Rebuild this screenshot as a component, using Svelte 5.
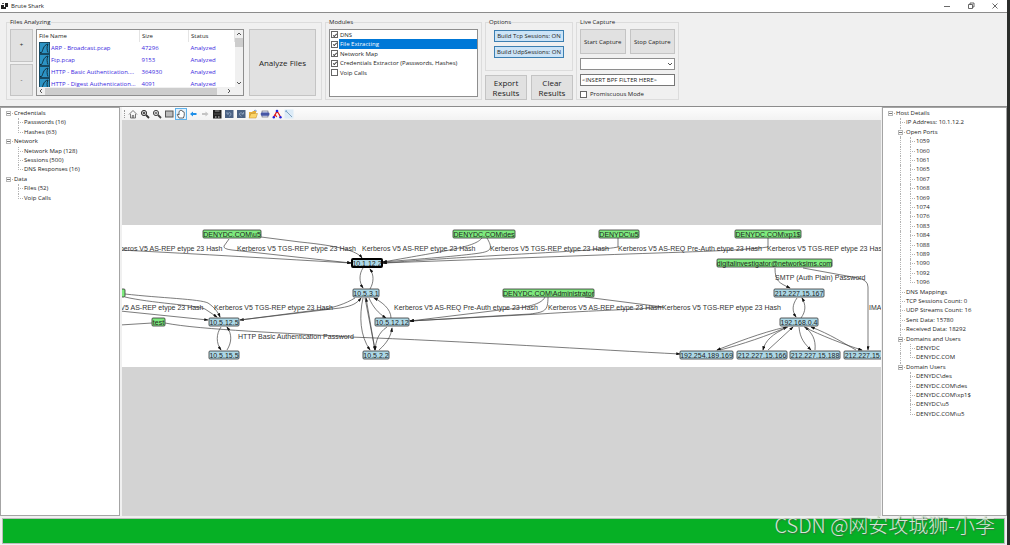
<script>
  // ── ribbon data ────────────────────────────────────────────
  const files = [
    { name: 'ARP - Broadcast.pcap', size: 47296 },
    { name: 'Ftp.pcap', size: 9153 },
    { name: 'HTTP - Basic Authentication....', size: 364930 },
    { name: 'HTTP - Digest Authentication...', size: 4091 }
  ];

  let modules = $state([
    { name: 'DNS', on: true },
    { name: 'File Extracting', on: true },
    { name: 'Network Map', on: true },
    { name: 'Credentials Extractor (Passwords, Hashes)', on: true },
    { name: 'Voip Calls', on: false }
  ]);
  let selected = $state(1);
  let filter = $state('<INSERT BPF FILTER HERE>');
  let tcp = $state(true);
  let udp = $state(true);

  // ── trees ──────────────────────────────────────────────────
  const results = [
    { text: 'Credentials', kids: [{ text: 'Passwords (16)' }, { text: 'Hashes (63)' }] },
    { text: 'Network', kids: [{ text: 'Network Map (128)' }, { text: 'Sessions (500)' }, { text: 'DNS Responses (16)' }] },
    { text: 'Data', kids: [{ text: 'Files (52)' }, { text: 'Voip Calls' }] }
  ];
  const ports = [1059, 1060, 1061, 1065, 1067, 1068, 1069, 1074, 1076, 1083, 1084, 1088, 1089, 1090, 1092, 1096];
  const host = [
    {
      text: 'Host Details',
      kids: [
        { text: 'IP Address: 10.1.12.2' },
        { text: 'Open Ports', kids: ports.map((p) => ({ text: String(p) })) },
        { text: 'DNS Mappings' },
        { text: 'TCP Sessions Count: 0' },
        { text: 'UDP Streams Count: 16' },
        { text: 'Sent Data: 15780' },
        { text: 'Received Data: 18292' },
        { text: 'Domains and Users', kids: [{ text: 'DENYDC' }, { text: 'DENYDC.COM' }] },
        {
          text: 'Domain Users',
          kids: ['DENYDC\\des', 'DENYDC.COM\\des', 'DENYDC.COM\\xp1$', 'DENYDC\\u5', 'DENYDC.COM\\u5'].map((text) => ({ text }))
        }
      ]
    }
  ];

  // flatten to rows; guides = one cell per level, 'line' | 'tee' | 'end' | ''
  function flatten(nodes, parents = [], root = true) {
    return nodes.flatMap((n, i) => {
      const last = i === nodes.length - 1;
      const own = root ? [] : [last ? 'end' : 'tee'];
      const down = root ? [] : [last ? '' : 'line'];
      const row = { text: n.text, box: !!n.kids, root, guides: [...parents, ...own] };
      return [row, ...flatten(n.kids ?? [], [...parents, ...down], false)];
    });
  }
  const resultRows = flatten(results);
  const hostRows = flatten(host);

  // ── network map ────────────────────────────────────────────
  const nodes = [
    { x: 203, y: 229, w: 58, t: 'DENYDC.COM\\u5', user: true },
    { x: 453, y: 229, w: 62, t: 'DENYDC.COM\\des', user: true },
    { x: 599, y: 229, w: 40, t: 'DENYDC\\u5', user: true },
    { x: 735, y: 229, w: 66, t: 'DENYDC.COM\\xp1$', user: true },
    { x: 717, y: 258, w: 115, t: 'digitalinvestigator@networksims.com', user: true },
    { x: 503, y: 288, w: 91, t: 'DENYDC.COM\\Administrator', user: true },
    { x: 94, y: 288, w: 31, t: '', user: true },
    { x: 152, y: 317, w: 13, t: 'test', user: true },
    { x: 352, y: 258, w: 30, t: '10.1.12.2', current: true },
    { x: 353, y: 288, w: 26, t: '10.5.3.1' },
    { x: 209, y: 317, w: 30, t: '10.5.12.5' },
    { x: 375, y: 317, w: 34, t: '10.5.12.12' },
    { x: 209, y: 350, w: 30, t: '10.5.15.5' },
    { x: 363, y: 350, w: 26, t: '10.5.2.2' },
    { x: 774, y: 288, w: 50, t: '212.227.15.167' },
    { x: 780, y: 317, w: 38, t: '192.168.0.4' },
    { x: 680, y: 350, w: 53, t: '192.254.189.169' },
    { x: 737, y: 350, w: 50, t: '212.227.15.166' },
    { x: 790, y: 350, w: 50, t: '212.227.15.188' },
    { x: 844, y: 350, w: 50, t: '212.227.15.189' }
  ];

  const asRep = 'Kerberos V5 AS-REP etype 23 Hash';
  const tgsRep = 'Kerberos V5 TGS-REP etype 23 Hash';
  const preAuth = 'Kerberos V5 AS-REQ Pre-Auth etype 23 Hash';
  const labels = [
    { x: 109, y: 250, t: asRep },
    { x: 237, y: 250, t: tgsRep },
    { x: 362, y: 250, t: asRep },
    { x: 490, y: 250, t: tgsRep },
    { x: 618, y: 250, t: preAuth },
    { x: 767, y: 250, t: tgsRep },
    { x: 775, y: 279, t: 'SMTP (Auth Plain) Password' },
    { x: 90, y: 309, t: asRep },
    { x: 214, y: 309, t: tgsRep },
    { x: 394, y: 309, t: preAuth },
    { x: 548, y: 309, t: asRep },
    { x: 662, y: 309, t: tgsRep },
    { x: 869, y: 309, t: 'IMAP Password' },
    { x: 238, y: 338, t: 'HTTP Basic Authentication Password' }
  ];

  const edges = [
    'M229 238 L224 245 Q223 248 232 249 L351 262',
    'M261 236 L300 241 C340 245 357 250 362 257',
    'M120 249 C200 253 280 258 351 262',
    'M482 237 C475 246 450 249 383 261',
    'M487 237 C492 246 493 250 480 252 C460 255 420 258 383 261',
    'M618 237 V246 C600 250 500 253 383 262',
    'M768 237 V246 C740 250 680 251 600 254 L383 262',
    'M363 267 C359 273 359 281 363 287',
    'M370 288 C374 281 374 274 370 268',
    'M125 293 C160 297 200 298 208 302 C214 306 218 311 220 316',
    'M125 296 C150 302 195 304 205 308 L217 316',
    'M120 310 L208 319',
    'M355 297 C345 303 335 306 325 308 L240 319',
    'M240 319 L340 307 C353 305 357 302 361 297',
    'M165 322 C200 329 290 332 350 336 C460 340 600 349 680 353',
    'M221 326 C216 333 216 342 221 349',
    'M227 349 C232 341 232 333 227 326',
    'M363 297 C359 315 360 335 370 349',
    'M375 349 L366 297',
    'M365 297 L375 349',
    'M369 297 C373 306 378 312 386 317',
    'M391 317 C391 308 382 301 374 297',
    'M387 326 C378 332 376 340 375 349',
    'M379 349 C387 342 391 335 392 327',
    'M545 296 C541 305 520 307 500 309 L410 320',
    'M548 296 C548 310 545 311 530 313 L410 320',
    'M663 306 C630 309 600 309 540 313 L410 320',
    'M775 267 C775 280 779 282 790 287',
    'M803 267 L858 277 Q868 279 868 286 V349',
    'M797 297 C792 304 792 310 796 316',
    'M801 317 C806 310 806 304 802 297',
    'M786 326 C760 332 735 342 717 349',
    'M720 349 C740 344 770 334 787 326',
    'M788 326 C772 333 765 340 763 349',
    'M768 349 L793 326',
    'M799 326 C800 338 805 343 811 349',
    'M815 349 C816 338 812 332 805 326',
    'M804 326 C820 334 845 344 862 349',
    'M856 349 C845 343 830 333 811 326'
  ];
  // tails that run behind a label, no arrowhead
  const tails = ['M120 324 L152 322', 'M585 296 L663 306'];
</script>

{#snippet tree(rows, label)}
  <ul class="tree" aria-label={label}>
    {#each rows as row}
      <li>
        {#each row.guides as g, k}
          <span class="guide {g}">{#if row.box && k === row.guides.length - 1}<i class="box"></i>{/if}</span>
        {/each}
        {#if row.root}
          <span class="guide root"><i class="box"></i></span>
        {/if}
        <span class="text">{row.text}</span>
      </li>
    {/each}
  </ul>
{/snippet}

<div class="app">
  <header class="title">
    <svg class="logo" viewBox="0 0 8 8" aria-hidden="true">
      <path d="M0 3h3v4H0z M4 1h3v4H4z M3 5h2v2H3z" fill="#222" />
      <path d="M1 1h2v1H1z" fill="#555" />
    </svg>
    <h1>Brute Shark</h1>
    <div class="window-buttons">
      <button aria-label="Minimize"><svg viewBox="0 0 8 8"><path d="M1 4.5h6" /></svg></button>
      <button aria-label="Restore"><svg viewBox="0 0 8 8"><path d="M1.5 2.5h4v4h-4z M3 2.5V1h4v4H5.5" /></svg></button>
      <button aria-label="Close"><svg viewBox="0 0 8 8"><path d="M1.5 1.5l5 5 M6.5 1.5l-5 5" /></svg></button>
    </div>
  </header>

  <div class="ribbon">
    <fieldset>
      <legend>Files Analyzing</legend>
      <div class="files">
        <div class="stack">
          <button class="btn" aria-label="Add file">+</button>
          <button class="btn" aria-label="Remove file">-</button>
        </div>
        <div class="list">
          <div class="pane">
            <table>
              <thead>
                <tr><th>File Name</th><th>Size</th><th>Status</th></tr>
              </thead>
              <tbody>
                {#each files as f}
                  <tr>
                    <td>
                      <div class="file">
                        <svg viewBox="0 0 11 12" aria-hidden="true">
                          <rect x="0.5" y="0.5" width="10" height="11" fill="#2c93c4" stroke="#174a63" />
                          <path d="M1 10.5H2.5C4 9 4 3 9 2C7.5 5 8 8 9 10.5" fill="none" stroke="#10303f" />
                        </svg>
                        {f.name}
                      </div>
                    </td>
                    <td>{f.size}</td>
                    <td>Analyzed</td>
                  </tr>
                {/each}
              </tbody>
            </table>
            <div class="vbar" aria-hidden="true">
              <svg viewBox="0 0 8 8"><path d="M2 5l2-2 2 2" /></svg>
              <span></span>
              <svg viewBox="0 0 8 8"><path d="M2 3l2 2 2-2" /></svg>
            </div>
          </div>
          <div class="hbar" aria-hidden="true">
            <svg viewBox="0 0 8 8"><path d="M5 2L3 4l2 2" /></svg>
            <span></span>
            <svg viewBox="0 0 8 8"><path d="M3 2l2 2-2 2" /></svg>
          </div>
        </div>
        <button class="btn big analyze">Analyze Files</button>
      </div>
    </fieldset>

    <fieldset>
      <legend>Modules</legend>
      <div class="modules">
        {#each modules as m, i}
          <label>
            <input type="checkbox" bind:checked={m.on} onchange={() => (selected = i)} />
            <span class:selected={selected === i}>{m.name}</span>
          </label>
        {/each}
      </div>
    </fieldset>

    <div class="column">
      <fieldset class="options">
        <legend>Options</legend>
        <div class="toggles">
          <button class="toggle" onclick={() => (tcp = !tcp)}>Build Tcp Sessions: {tcp ? 'ON' : 'OFF'}</button>
          <button class="toggle" onclick={() => (udp = !udp)}>Build UdpSessions: {udp ? 'ON' : 'OFF'}</button>
        </div>
      </fieldset>
      <div class="pair">
        <button class="btn big">Export Results</button>
        <button class="btn big">Clear Results</button>
      </div>
    </div>

    <fieldset>
      <legend>Live Capture</legend>
      <div class="capture">
        <div class="pair">
          <button class="btn">Start Capture</button>
          <button class="btn">Stop Capture</button>
        </div>
        <div class="combo">
          <select aria-label="Network device"><option></option></select>
          <svg viewBox="0 0 8 8" aria-hidden="true"><path d="M2 3l2 2 2-2" /></svg>
        </div>
        <input class="filter" type="text" aria-label="BPF filter" bind:value={filter} />
        <label class="promiscuous"><input type="checkbox" /> Promiscuous Mode</label>
      </div>
    </fieldset>
  </div>

  <main>
    <aside class="left">{@render tree(resultRows, 'Results')}</aside>

    <section class="map">
      <div class="tools">
        <i class="grip"></i>
        <button aria-label="Home"><svg viewBox="0 0 10 10"><path d="M1 5.5L5 1.5l4 4M2.5 5v4h5V5M4.3 9V6.5h1.4V9" fill="none" stroke="#555" stroke-width="0.8" /></svg></button>
        <button aria-label="Zoom in"><svg viewBox="0 0 10 10"><circle cx="4" cy="4" r="2.6" fill="#ddd" stroke="#333" /><path d="M6 6l3 3" stroke="#333" stroke-width="1.8" /><path d="M2.8 4h2.4M4 2.8v2.4" stroke="#222" /></svg></button>
        <button aria-label="Zoom out"><svg viewBox="0 0 10 10"><circle cx="4" cy="4" r="2.6" fill="#ddd" stroke="#444" /><path d="M6 6l3 3" stroke="#444" stroke-width="1.8" /><path d="M2.8 4h2.4" stroke="#222" /></svg></button>
        <button aria-label="Window zoom"><svg viewBox="0 0 10 10"><rect x="1.5" y="2" width="7.5" height="6" fill="#bbb" stroke="#555" /></svg></button>
        <button aria-label="Pan" class="active"><svg viewBox="0 0 10 10"><path d="M3 9L1.2 5.5l1-.5L3 6V3q0-1 .8-.8Q4 1 5 1.4Q6 1 6.3 2.2Q7.2 1.8 7.3 3Q8.5 2.8 8.3 4.2Q8.5 7 7.3 9z" fill="#fff" stroke="#444" stroke-width="0.8" /></svg></button>
        <button aria-label="Back"><svg viewBox="0 0 10 10"><path d="M2 5l3-2.5v1.5h3.5v2H5v1.5z" fill="#1e8fe8" /></svg></button>
        <button aria-label="Forward"><svg viewBox="0 0 10 10"><path d="M8.5 5l-3-2.5v1.5H2v2h3.5v1.5z" fill="#c4c4c4" /></svg></button>
        <button aria-label="Save"><svg viewBox="0 0 10 10"><rect x="1" y="1" width="8.5" height="8.5" fill="#222" /><path d="M3 2h4.5" stroke="#999" /><path d="M2 5h6.5" stroke="#777" stroke-width="0.6" /><path d="M3 8h1.5M6 8h1.5" stroke="#ddd" /></svg></button>
        <button aria-label="Undo"><svg viewBox="0 0 10 10"><rect x="1" y="1" width="8.5" height="8" fill="#4a6183" /><path d="M3 3v2h2M3.3 5Q5.5 2.5 7 4.5Q7.5 6.5 5 7.3" fill="none" stroke="#93a7c4" stroke-width="0.8" /></svg></button>
        <button aria-label="Redo"><svg viewBox="0 0 10 10"><rect x="1" y="1" width="8.5" height="8" fill="#4a6183" /><path d="M7.5 3v2h-2M7 5Q5 2.5 3.5 4.5Q3 6.5 5.5 7.3" fill="none" stroke="#93a7c4" stroke-width="0.8" /></svg></button>
        <button aria-label="Open"><svg viewBox="0 0 10 10"><path d="M1 9V3h3l1-1h3v2" fill="#e4ad3a" /><path d="M1 9l2-4.5h6.5L8 9z" fill="#fbd56b" stroke="#c08a20" stroke-width="0.5" /><path d="M6 1.5q2-.8 3 1" fill="none" stroke="#4a78c0" stroke-width="0.7" /></svg></button>
        <button aria-label="Print"><svg viewBox="0 0 10 10"><rect x="2" y="2" width="6" height="6" fill="#dde5fa" stroke="#556" stroke-width="0.6" /><rect x="0.8" y="3.5" width="8.6" height="3.2" rx="1" fill="#4656a5" /></svg></button>
        <button aria-label="Layout"><svg viewBox="0 0 10 10"><path d="M5 2L3 6M5 2l2.5 4M3 5.5L1.8 8M3 5.5l1.7 2.5M7.2 5.5L8.5 8" stroke="#e02020" stroke-width="1.3" /><g fill="#2222dd"><circle cx="5" cy="2" r="1.3" /><circle cx="1.8" cy="8.2" r="1.2" /><circle cx="8.5" cy="8.2" r="1.2" /></g></svg></button>
        <button aria-label="Insert edge"><svg viewBox="0 0 10 10"><rect x="0.5" y="0.5" width="9" height="9" fill="#dcebf7" /><path d="M2 2l6 6" stroke="#6a90b0" stroke-width="0.8" /><circle cx="2.2" cy="2.2" r="1" fill="#7aa5cc" /></svg></button>
      </div>

      <div class="canvas">
        <svg class="graph" viewBox="122 224 759 142" role="img" aria-label="Network map">
          <defs>
            <marker id="arrow" viewBox="0 0 6 4" refX="5" refY="2" markerWidth="5" markerHeight="3" markerUnits="userSpaceOnUse" orient="auto">
              <path d="M0 0L6 2L0 4z" fill="#111" />
            </marker>
          </defs>
          <g class="edges">
            {#each edges as d}<path {d} marker-end="url(#arrow)" />{/each}
            {#each tails as d}<path {d} />{/each}
          </g>
          <g class="labels">
            {#each labels as l}<text x={l.x} y={l.y}>{l.t}</text>{/each}
          </g>
          {#each nodes as n}
            <g class="node" class:user={n.user} class:current={n.current}>
              <rect x={n.x} y={n.y} width={n.w} height="8" rx="1" />
              <text x={n.x + n.w / 2} y={n.y + 7}>{n.t}</text>
            </g>
          {/each}
        </svg>
      </div>
    </section>

    <aside class="right">{@render tree(hostRows, 'Host details')}</aside>
  </main>

  <footer>
    <progress value="100" max="100" aria-label="Analysis progress"></progress>
    <span class="mark">CSDN @网安攻城狮-小李</span>
  </footer>
</div>

<style>
  :global(body) { background: #f0f0f0; }

  .app {
    display: flex;
    flex-direction: column;
    box-sizing: border-box;
    min-height: 100vh;
    border-right: 3px solid #2b2d2b;
    background: #f0f0f0;
    color: #1c1c1c;
    font: 6px/8px 'Open Sans', 'Noto Sans', sans-serif;
  }
  button, input, select {
    box-sizing: border-box;
    margin: 0;
    padding: 0;
    border-radius: 0;
    font: inherit;
    color: inherit;
  }
  ul, h1 { margin: 0; padding: 0; font: inherit; list-style: none; }
  svg { display: block; }

  /* ── title bar ─────────────────────────────────────────── */
  .title {
    display: flex;
    align-items: center;
    height: 12px;
    padding-left: 1px;
    background: #fff;
    border-bottom: 1px solid #8c8c8c;
  }
  .logo { width: 8px; height: 8px; margin-right: 2px; }
  .title h1 { flex: 1; }
  .window-buttons { display: flex; }
  .window-buttons button {
    display: grid;
    place-items: center;
    width: 24px;
    height: 12px;
    border: 0;
    background: none;
  }
  .window-buttons svg { width: 8px; height: 8px; fill: none; stroke: #444; stroke-width: 0.8; }

  /* ── ribbon ────────────────────────────────────────────── */
  .ribbon {
    display: flex;
    gap: 3px;
    padding: 5px 6px 6px;
    border-bottom: 1px solid #8c8c8c;
  }
  fieldset {
    box-sizing: border-box;
    min-width: 0;
    height: 82px;
    margin: 0;
    padding: 3px;
    border: 1px solid #dcdcdc;
  }
  legend { padding: 0; }
  .btn {
    border: 1px solid #c4c4c4;
    background: #e1e1e1;
  }
  .big { font-size: 8px; line-height: 10px; }

  .files { display: flex; gap: 3px; height: 67px; }
  .stack { display: flex; flex-direction: column; gap: 2px; }
  .stack .btn { flex: 1; width: 23px; }
  .analyze { width: 67px; margin: 0 2px; }
  .list {
    display: flex;
    flex-direction: column;
    box-sizing: border-box;
    width: 208px;
    border: 1px solid #8e8e8e;
    background: #fff;
  }
  .pane { flex: 1; display: flex; min-height: 0; overflow: hidden; }
  table { flex: 1; border-collapse: collapse; table-layout: fixed; height: 60px; }
  th, td { padding: 0 2px; font-weight: 400; text-align: left; white-space: nowrap; }
  th { height: 12px; border-right: 1px solid #e4e4e4; }
  th:first-child { width: 98px; }
  th:nth-child(2) { width: 44px; }
  td { height: 12px; color: #3a28e0; }
  .file { display: flex; align-items: center; gap: 1px; }
  .file svg { width: 11px; height: 12px; }
  .vbar, .hbar { display: flex; align-items: center; background: #f0f0f0; }
  .vbar { flex-direction: column; width: 8px; }
  .vbar svg, .hbar svg { width: 8px; height: 8px; fill: none; stroke: #555; stroke-width: 1; }
  .vbar span { width: 8px; height: 9px; margin-bottom: auto; background: #cdcdcd; }
  .hbar span { flex: 1; height: 7px; margin-right: 8px; background: #cdcdcd; }
  .hbar { height: 8px; padding-right: 10px; }

  input[type='checkbox'] {
    appearance: none;
    flex: none;
    display: grid;
    place-items: center;
    width: 7px;
    height: 7px;
    border: 1px solid #666;
    background: #fff;
  }
  input[type='checkbox']:checked::before {
    content: '';
    width: 4px;
    height: 2px;
    box-sizing: border-box;
    border: solid #444;
    border-width: 0 0 1px 1px;
    transform: rotate(-45deg);
  }
  .modules {
    box-sizing: border-box;
    width: 149px;
    height: 68px;
    border: 1px solid #8e8e8e;
    background: #fff;
  }
  .modules label { display: flex; align-items: center; gap: 1px; height: 9px; padding-left: 1px; }
  .modules label:nth-child(even) { height: 10px; }
  .modules label span { flex: 1; padding: 1px; line-height: 8px; }
  .modules .selected { background: #0078d7; color: #fff; }

  .column { display: flex; flex-direction: column; justify-content: space-between; width: 88px; }
  .options { height: 53px; }
  .toggles { display: flex; flex-direction: column; gap: 4px; padding: 1px 5px; }
  .toggle { height: 12px; border: 1px solid #3c7fb1; background: #cce4f7; white-space: nowrap; }
  .pair { display: flex; gap: 4px; }
  .pair .btn { flex: 1; height: 25px; }

  .capture { display: flex; flex-direction: column; gap: 4px; width: 95px; }
  .combo { position: relative; display: flex; }
  .combo select { flex: 1; height: 12px; appearance: none; border: 1px solid #8e8e8e; background: #fff; }
  .combo svg {
    position: absolute;
    right: 1px;
    top: 2px;
    width: 8px;
    height: 8px;
    fill: none;
    stroke: #555;
    pointer-events: none;
  }
  .filter { height: 12px; padding: 0 1px; border: 1px solid #777; background: #fff; }
  .promiscuous { display: flex; align-items: center; gap: 3px; }

  /* ── main panels ───────────────────────────────────────── */
  main { flex: 1; display: flex; gap: 1px; min-height: 0; }
  aside {
    flex: none;
    box-sizing: border-box;
    border: 1px solid #a4a4a4;
    background: #fff;
  }
  .left { width: 120px; margin-right: 1px; }
  .right { width: 125px; }

  .tree { padding: 1px 0 0 3px; }
  .tree li { display: flex; height: 9px; }
  .tree li:nth-child(5n + 2), .tree li:nth-child(5n + 4) { height: 10px; }
  .tree .text { line-height: 9px; white-space: nowrap; }
  .guide { position: relative; width: 10px; }
  .guide:first-child:not(.root) { margin-left: 10px; }
  .guide::before, .guide::after { content: ''; position: absolute; left: 4px; }
  .line::before, .tee::before { top: 0; bottom: 0; border-left: 1px dotted #b4b4b4; }
  .end::before { top: 0; height: 5px; border-left: 1px dotted #b4b4b4; }
  .tee::after, .end::after, .root::after { top: 4px; width: 5px; border-top: 1px dotted #b4b4b4; }
  .box {
    position: absolute;
    z-index: 1;
    left: 2px;
    top: 2px;
    box-sizing: border-box;
    width: 5px;
    height: 5px;
    border: 1px solid #b8b8b8;
    background: linear-gradient(#777, #777) center / 3px 1px no-repeat #fff;
  }

  .map { flex: 1; display: flex; flex-direction: column; min-width: 0; }
  .tools {
    display: flex;
    align-items: center;
    height: 13px;
    padding-left: 2px;
    background: linear-gradient(#fdfdfd, #f2f2f2);
  }
  .tools button { width: 12px; height: 12px; padding: 1px; border: 0; background: none; }
  .tools .active { background: #e3f1fc; box-shadow: inset 0 0 0 1px #5fb2ec; }
  .tools svg { width: 10px; height: 10px; }
  .grip { height: 8px; margin-right: 2px; border-left: 1px dotted #999; }
  .canvas { flex: 1; display: flex; flex-direction: column; background: #d3d3d3; }
  .canvas::before { content: ''; flex: 7; }
  .canvas::after { content: ''; flex: 10; }

  .graph { width: 100%; background: #fff; font: 7px 'Liberation Sans', Arial, sans-serif; }
  .edges { fill: none; stroke: #444; stroke-width: 0.7; }
  .labels { fill: #333; }
  .node rect { fill: #add8e6; stroke: #333; stroke-width: 0.8; }
  .node.user rect { fill: #7eea7e; }
  .node.current rect { stroke: #000; stroke-width: 2; }
  .node text { fill: #222; text-anchor: middle; }

  /* ── progress ──────────────────────────────────────────── */
  footer { position: relative; padding: 2px 2px 1px; }
  progress {
    display: block;
    appearance: none;
    box-sizing: border-box;
    width: 100%;
    height: 26px;
    border: 1px solid #bcbcbc;
    background: #e6e6e6;
  }
  progress::-webkit-progress-bar { background: #e6e6e6; }
  progress::-webkit-progress-value { background: #06b025; }
  .mark {
    position: absolute;
    right: 12px;
    bottom: 8px;
    color: #d5e5d6;
    font: 300 20px/24px 'Noto Sans CJK SC', sans-serif;
    text-shadow: 1px 1px 1px #3c6b45;
  }
</style>
